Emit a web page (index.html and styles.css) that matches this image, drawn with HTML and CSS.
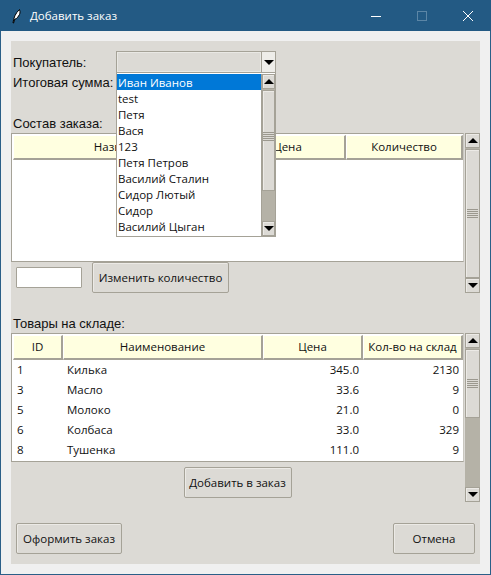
FILE: index.html
```html
<!DOCTYPE html>
<html lang="ru">
<head>
  <meta charset="UTF-8" />
  <title>Добавить заказ</title>
  <link rel="stylesheet" href="styles.css">
</head>
<body>
  <div class="window">
    <div class="titlebar">
      <svg class="app-icon" width="16" height="16" viewBox="0 0 16 16">
        <path d="M5 15 C5.5 10 7.5 5 11.5 1.5 C12.5 4 12 6.5 10.5 8 C9.5 10 8 11 6.8 11 L5.6 15 Z" fill="#fff" stroke="#000" stroke-width="1"/>
      </svg>
      <span class="title">Добавить заказ</span>
      <div class="controls">
        <span class="ctl"><svg width="12" height="12" viewBox="0 0 12 12"><path d="M1 6.5H11" stroke="#fff"/></svg></span>
        <span class="ctl"><svg width="12" height="12" viewBox="0 0 12 12"><rect x="1.5" y="1.5" width="9" height="9" fill="none" stroke="#5c86a6"/></svg></span>
        <span class="ctl"><svg width="12" height="12" viewBox="0 0 12 12"><path d="M1 1L11 11M11 1L1 11" stroke="#fff"/></svg></span>
      </div>
    </div>

    <div class="client">
      <div class="panel">
        <div class="row-buyer">
          <label class="lbl lbl-fixed">Покупатель:</label>
          <div class="combo">
            <div class="combo-value"></div>
            <div class="combo-btn"><i class="arrow-down"></i></div>
          </div>
        </div>
        <div class="row-sum"><label class="lbl">Итоговая сумма:</label></div>

        <label class="lbl lbl-section">Состав заказа:</label>
        <div class="section">
          <div class="section-main">
            <div class="tree tree-order">
              <table>
                <colgroup><col class="c-name1"><col class="c-price1"><col class="c-qty1"></colgroup>
                <thead><tr><th>Название</th><th>Цена</th><th>Количество</th></tr></thead>
              </table>
            </div>
            <div class="edit-row">
              <input class="entry" type="text">
              <button class="btn btn-change">Изменить количество</button>
            </div>
          </div>
          <div class="sb">
            <div class="sb-btn"><i class="arrow-up"></i></div>
            <div class="sb-track"><div class="thumb thumb-full"><span class="grip"></span></div></div>
            <div class="sb-btn"><i class="arrow-down"></i></div>
          </div>
        </div>

        <label class="lbl lbl-section">Товары на складе:</label>
        <div class="section">
          <div class="section-main">
            <div class="tree tree-stock">
              <table>
                <colgroup><col class="c-id"><col class="c-name2"><col class="c-price2"><col class="c-qty2"></colgroup>
                <thead><tr><th>ID</th><th>Наименование</th><th>Цена</th><th>Кол-во на склад</th></tr></thead>
                <tbody>
                  <tr><td>1</td><td>Килька</td><td class="num">345.0</td><td class="num">2130</td></tr>
                  <tr><td>3</td><td>Масло</td><td class="num">33.6</td><td class="num">9</td></tr>
                  <tr><td>5</td><td>Молоко</td><td class="num">21.0</td><td class="num">0</td></tr>
                  <tr><td>6</td><td>Колбаса</td><td class="num">33.0</td><td class="num">329</td></tr>
                  <tr><td>8</td><td>Тушенка</td><td class="num">111.0</td><td class="num">9</td></tr>
                </tbody>
              </table>
            </div>
            <div class="add-row"><button class="btn btn-add">Добавить в заказ</button></div>
          </div>
          <div class="sb">
            <div class="sb-btn"><i class="arrow-up"></i></div>
            <div class="sb-track"><div class="thumb thumb-stock"><span class="grip"></span></div></div>
            <div class="sb-btn"><i class="arrow-down"></i></div>
          </div>
        </div>

        <div class="footer">
          <button class="btn btn-submit">Оформить заказ</button>
          <button class="btn btn-cancel">Отмена</button>
        </div>

        <div class="dropdown">
          <ul class="dd-list">
            <li class="selected">Иван Иванов</li>
            <li>test</li>
            <li>Петя</li>
            <li>Вася</li>
            <li>123</li>
            <li>Петя Петров</li>
            <li>Василий Сталин</li>
            <li>Сидор Лютый</li>
            <li>Сидор</li>
            <li>Василий Цыган</li>
          </ul>
          <div class="sb sb-dd">
            <div class="sb-btn"><i class="arrow-up"></i></div>
            <div class="sb-track"><div class="thumb thumb-dd"><span class="grip"></span></div></div>
            <div class="sb-btn"><i class="arrow-down"></i></div>
          </div>
        </div>
      </div>
    </div>
  </div>
</body>
</html>
```

FILE: styles.css
```css
* { box-sizing: border-box; margin:0; padding:0; }
html, body { width:491px; height:575px; overflow:hidden; }
body {
  font-family: 'Open Sans', 'Noto Sans', sans-serif;
  font-size: 11.5px;
  color: #111;
}
.window {
  width:491px; height:575px;
  border:1px solid #2a5f88; border-top:none;
  background:#f0f0f0;
  display:flex; flex-direction:column;
}
.titlebar {
  height:31px; flex:none;
  margin:0 -1px; padding-left:8px;
  background:#235a84; color:#fff;
  display:flex; align-items:center;
}
.app-icon { margin-right:6px; }
.title { font-size:11.5px; }
.controls { margin-left:auto; display:flex; }
.ctl {
  width:46px; height:31px;
  display:flex; align-items:center; justify-content:center;
}
.client { flex:1; padding:10px; }
.panel {
  position:relative;
  height:523px;
  padding-top:10px;
  background:#dcdad5;
}

.lbl { font-family:'Liberation Sans', sans-serif; font-size:13px; color:#111; display:block; padding-left:2px; }
.lbl-fixed { width:105px; }
.lbl-section { height:20px; line-height:22px; margin-top:20px; }
.row-buyer { display:flex; align-items:center; height:22px; }
.row-sum { height:20px; line-height:20px; }

.combo {
  width:160px; height:22px;
  border:1px solid #a5a297;
  display:flex;
}
.combo-value { flex:1; background:#dcdad5; border:1px solid #e9e8e4; }
.combo-btn {
  width:14px; background:#eeede9;
  border-left:1px solid #a5a297;
  display:flex; align-items:center; justify-content:center;
}
.arrow-down, .arrow-up { display:block; width:0; height:0; border-left:5px solid transparent; border-right:5px solid transparent; }
.arrow-down { border-top:5px solid #000; }
.arrow-up { border-bottom:5px solid #000; }

.section { display:flex; gap:1px; }
.section-main { width:453px; }

.tree {
  height:129px;
  background:#fff;
  border:1px solid #a5a297;
  border-right-color:#c9c7c0;
  padding:1px 0 0 1px;
  overflow:hidden;
}
table { width:450px; border-collapse:separate; border-spacing:0; table-layout:fixed; }
.c-name1 { width:217px; }
.c-price1 { width:116px; }
.c-qty1 { width:117px; }
.c-id { width:50px; }
.c-name2 { width:200px; }
.c-price2 { width:100px; }
.c-qty2 { width:100px; }
th {
  height:25px;
  padding-bottom:2px;
  font-weight:normal; text-align:center;
  background:#ffffe0;
  border:1px solid #fff;
  border-right:2px solid #a5a297;
  border-bottom:2px solid #a5a297;
}
td { height:20px; padding:0 4px 2px 4px; white-space:nowrap; }
td.num { text-align:right; }

.edit-row { height:31px; display:flex; align-items:center; padding-left:5px; gap:10px; }
.entry { width:66px; height:21px; background:#fff; border:1px solid #a5a297; border-radius:1px; outline:none; }
.btn {
  height:31px;
  font:inherit; color:#111;
  background:#dcdad5;
  border:1px solid #a5a297; border-radius:2px;
  box-shadow:inset 1px 1px 0 #eceae6;
}
.btn-change { width:137px; }
.btn-add { width:108px; }
.btn-submit { width:106px; }
.btn-cancel { width:82px; }
.add-row { height:40px; padding-top:5px; display:flex; justify-content:center; }
.footer { display:flex; justify-content:space-between; padding:0 5px; margin-top:21px; }

.sb {
  width:15px; flex:none;
  display:flex; flex-direction:column;
  background:#b5b2a7;
}
.sb-btn {
  height:15px; flex:none;
  background:#dcdad5;
  border:1px solid #a5a297;
  box-shadow:inset 1px 1px 0 #eceae6;
  display:flex; align-items:center; justify-content:center;
}
.sb-track { flex:1; min-height:0; padding-top:1px; }
.thumb {
  background:#dcdad5;
  border:1px solid #a5a297;
  box-shadow:inset 1px 1px 0 #eceae6;
  display:flex; align-items:center; justify-content:center;
}
.thumb-full { height:100%; }
.thumb-stock { height:69px; }
.thumb-dd { height:101px; }
.thumb-dd .grip { margin-bottom:8px; }
.grip {
  width:11px; height:9px;
  background:repeating-linear-gradient(to bottom, #9b988e 0, #9b988e 1px, #dcdad5 1px, #dcdad5 2px);
}

.dropdown {
  position:absolute; left:105px; top:32px;
  width:160px; height:164px;
  background:#fff;
  border:1px solid #a5a297;
  border-top:none;
  padding-top:1px;
  display:flex;
}
.dd-list { list-style:none; width:144px; flex:none; }
.dd-list li { height:16px; line-height:18px; padding-left:1px; white-space:nowrap; }
.dd-list li.selected { background:#0078d7; color:#fff; }
.sb-dd { flex:1; width:auto; border-left:1px solid #a5a297; }
```
